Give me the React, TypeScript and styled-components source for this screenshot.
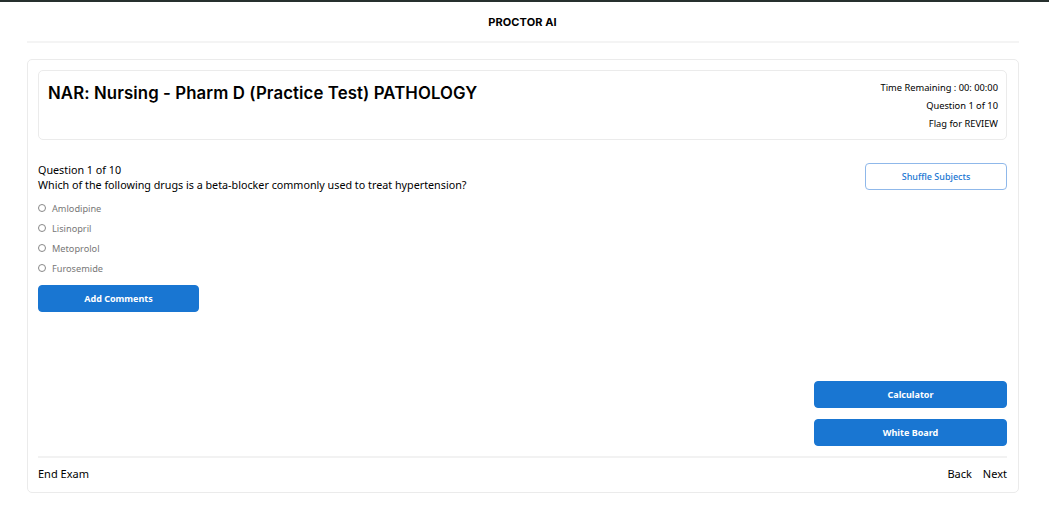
import React from "react";
import styled, { createGlobalStyle } from "styled-components";

const Global = createGlobalStyle`
  html, body { margin: 0; padding: 0; background: #fff; }
  body { font-family: "Noto Sans", "Open Sans", sans-serif; color: #000; }
  * { box-sizing: border-box; }
`;

const Page = styled.div`
  border-top: 2px solid #26302e;
  padding: 0 30px 0 27px;
  min-height: 531px;
`;

const TopBar = styled.header`
  height: 41px;
  display: flex;
  align-items: center;
  justify-content: center;
  border-bottom: 2px solid #f4f4f4;
`;

const Brand = styled.div`
  font-family: "Inter", sans-serif;
  font-weight: 700;
  font-size: 11px;
  letter-spacing: 0.1px;
  margin-left: -1px;
`;

const Card = styled.main`
  margin-top: 16px;
  border: 1px solid #ebebeb;
  border-radius: 5px;
  padding: 10px 11px 3px 10px;
  display: flex;
  flex-direction: column;
  height: 434px;
`;

const ExamHeader = styled.section`
  border: 1px solid #ebebeb;
  border-radius: 5px;
  height: 70px;
  padding: 8px 8px 0 9px;
  display: flex;
  justify-content: space-between;
  align-items: flex-start;
`;

const Title = styled.h1`
  margin: 4px 0 0;
  font-family: "Inter", sans-serif;
  font-weight: 600;
  font-size: 16.8px;
  letter-spacing: 0.1px;
`;

const Meta = styled.div`
  display: flex;
  flex-direction: column;
  align-items: flex-end;
  font-size: 9.3px;
  line-height: 18px;
`;

const Body = styled.section`
  display: flex;
  justify-content: space-between;
  padding-top: 22px;
  flex: 1;
`;

const QuestionCol = styled.div`
  display: flex;
  flex-direction: column;
`;

const QText = styled.div`
  font-size: 10.75px;
  line-height: 15px;
  margin-top: 1px;
  & + & { margin-top: 0; }
`;

const Options = styled.div`
  margin-top: 5px;
  display: flex;
  flex-direction: column;
`;

const Option = styled.label`
  display: flex;
  align-items: center;
  height: 20px;
  font-size: 9.2px;
  color: #777;
`;

const Radio = styled.span`
  width: 8px;
  height: 8px;
  border: 1px solid #888;
  border-radius: 50%;
  margin-right: 6px;
`;

const Button = styled.button<{ $variant?: "solid" | "outline"; $w: number }>`
  width: ${(p) => p.$w}px;
  height: 27px;
  border-radius: 4px;
  font-family: "Noto Sans", sans-serif;
  font-size: 9px;
  font-weight: ${(p) => (p.$variant === "outline" ? 500 : 700)};
  cursor: pointer;
  border: 1px solid ${(p) => (p.$variant === "outline" ? "#8fb8ea" : "#1976d2")};
  background: ${(p) => (p.$variant === "outline" ? "#fff" : "#1976d2")};
  color: ${(p) => (p.$variant === "outline" ? "#1976d2" : "#fff")};
`;

const CommentWrap = styled.div`
  margin-top: 7px;
`;

const SideCol = styled.div`
  display: flex;
  flex-direction: column;
  align-items: flex-end;
  justify-content: space-between;
  padding-top: 1px;
  padding-bottom: 10px;
`;

const ToolStack = styled.div`
  display: flex;
  flex-direction: column;
  gap: 11px;
`;

const Footer = styled.footer`
  border-top: 2px solid #f2f2f2;
  display: flex;
  justify-content: space-between;
  align-items: center;
  height: 33px;
  font-size: 11px;
`;

const NavGroup = styled.div`
  display: flex;
  gap: 11px;
`;

const options = ["Amlodipine", "Lisinopril", "Metoprolol", "Furosemide"];

export default function App() {
  return (
    <>
      <Global />
      <Page>
        <TopBar>
          <Brand>PROCTOR AI</Brand>
        </TopBar>
        <Card>
          <ExamHeader>
            <Title>NAR: Nursing - Pharm D (Practice Test) PATHOLOGY</Title>
            <Meta>
              <span>Time Remaining : 00: 00:00</span>
              <span>Question 1 of 10</span>
              <span>Flag for REVIEW</span>
            </Meta>
          </ExamHeader>
          <Body>
            <QuestionCol>
              <QText>Question 1 of 10</QText>
              <QText>Which of the following drugs is a beta-blocker commonly used to treat hypertension?</QText>
              <Options>
                {options.map((o) => (
                  <Option key={o}>
                    <Radio />
                    {o}
                  </Option>
                ))}
              </Options>
              <CommentWrap>
                <Button $w={161}>Add Comments</Button>
              </CommentWrap>
            </QuestionCol>
            <SideCol>
              <Button $variant="outline" $w={142}>Shuffle Subjects</Button>
              <ToolStack>
                <Button $w={193}>Calculator</Button>
                <Button $w={193}>White Board</Button>
              </ToolStack>
            </SideCol>
          </Body>
          <Footer>
            <span>End Exam</span>
            <NavGroup>
              <span>Back</span>
              <span>Next</span>
            </NavGroup>
          </Footer>
        </Card>
      </Page>
    </>
  );
}
